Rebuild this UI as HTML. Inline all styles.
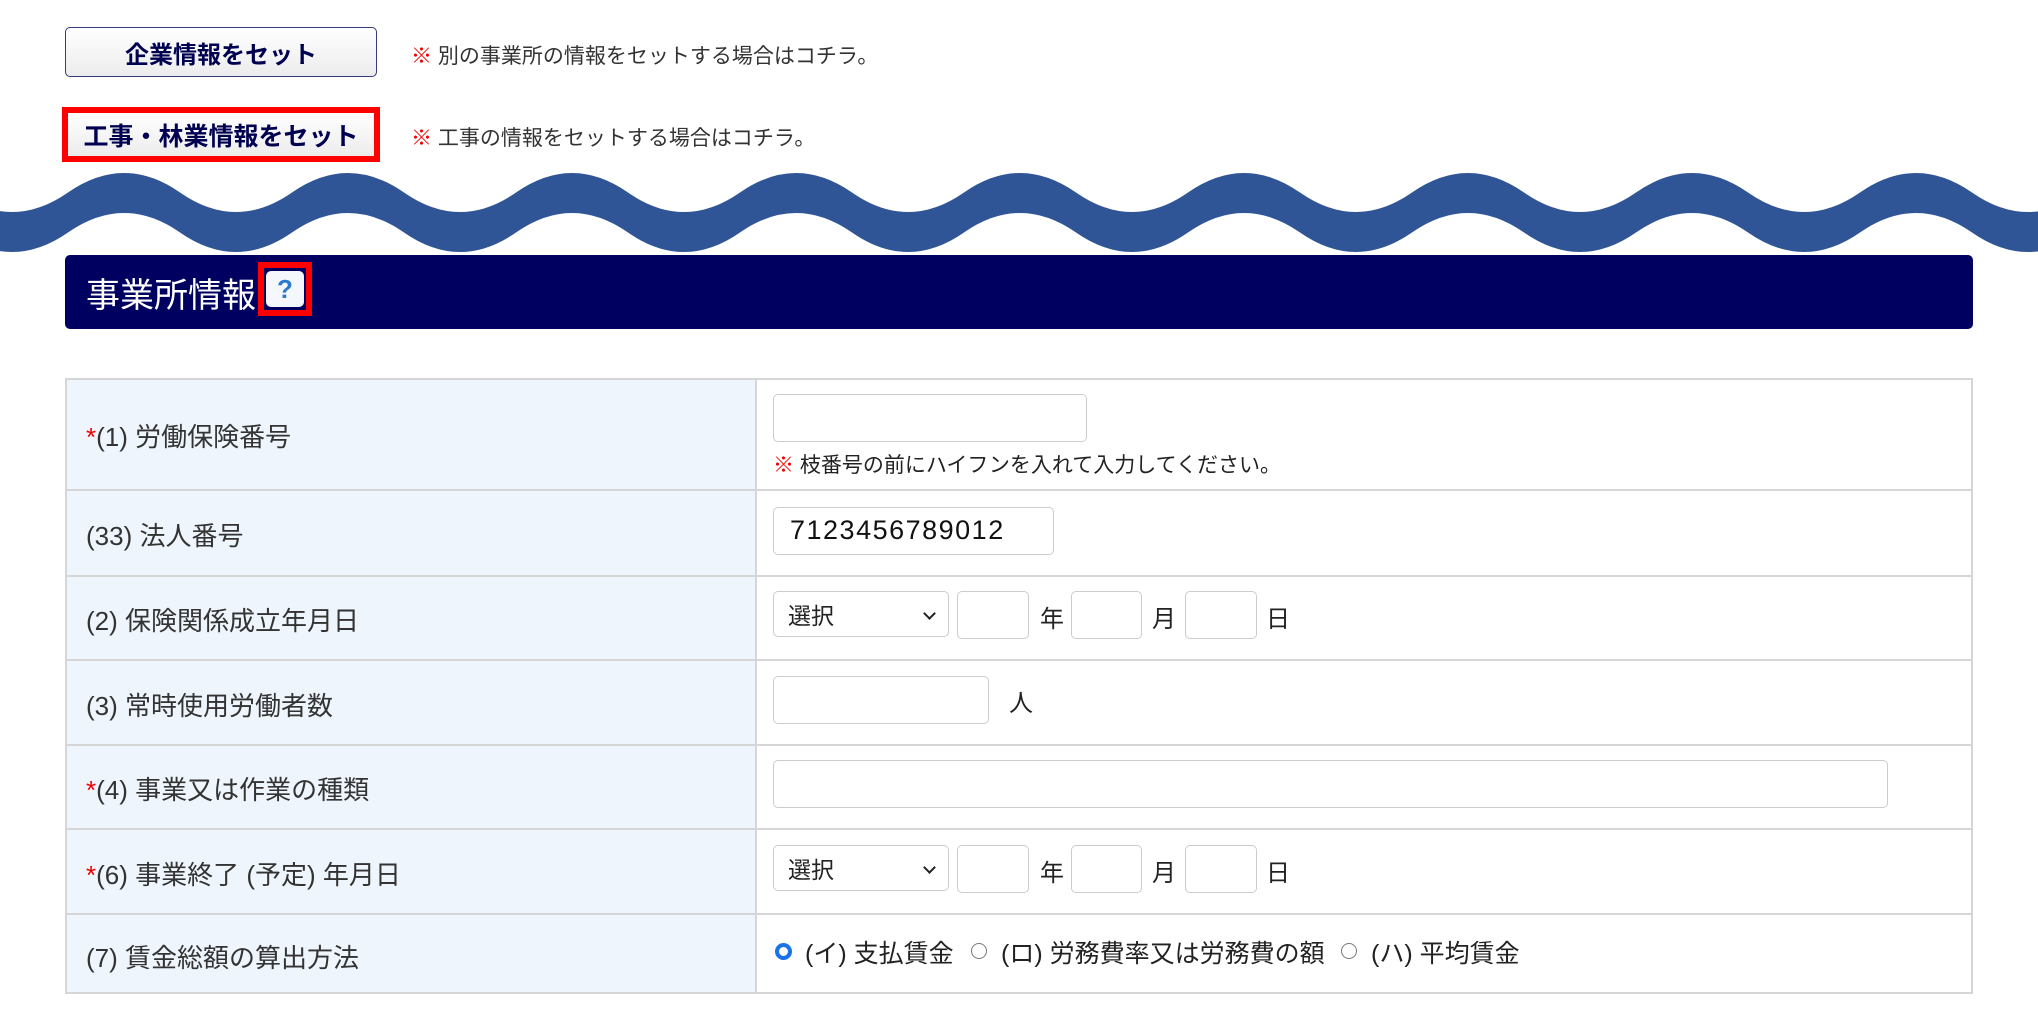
<!DOCTYPE html>
<html><head><meta charset="utf-8"><style>
*{box-sizing:border-box;margin:0;padding:0}
body{width:2038px;height:1018px;background:#fff;font-family:"Liberation Sans","Noto Sans CJK JP",sans-serif;color:#333;position:relative;overflow:hidden}
.a{position:absolute}
.btn{position:absolute;background:linear-gradient(#fff,#ececec);border:1px solid #333a80;border-radius:5px;color:#000050;font-weight:bold;font-size:24px;display:flex;align-items:center;justify-content:center}
.note{position:absolute;font-size:21px;color:#333}
.note b{color:#e00;font-weight:bold}
.lbl{position:absolute;left:86px;font-size:26px;color:#333}
.lbl i{color:#e00;font-style:normal}
.inp{position:absolute;border:1px solid #ccc;border-radius:5px;background:#fff}
.sel{position:absolute;border:1px solid #ccc;border-radius:5px;background:#fff;font-size:23px;padding-left:14px;display:flex;align-items:center;color:#222}
.sel:after{content:"";position:absolute;right:14px;top:17px;width:7px;height:7px;border-right:2px solid #222;border-bottom:2px solid #222;transform:rotate(45deg)}
.t{position:absolute;font-size:24px;color:#222}
.hl{position:absolute;left:65px;width:1908px;height:2px;background:#d6d6d6}
</style></head><body>
<div class="btn" style="left:65px;top:27px;width:312px;height:50px">企業情報をセット</div>
<div class="note" style="left:411px;top:40px"><b>※</b> 別の事業所の情報をセットする場合はコチラ。</div>
<div class="a" style="left:62px;top:107px;width:318px;height:55px;border:6px solid #f00"></div>
<div class="btn" style="left:68px;top:113px;width:306px;height:43px;border:none;border-radius:0;font-size:25px">工事・林業情報をセット</div>
<div class="note" style="left:411px;top:122px"><b>※</b> 工事の情報をセットする場合はコチラ。</div>
<svg class="a" style="left:0;top:0" width="2038" height="300" viewBox="0 0 2038 300">
<path fill="#305596" d="M -44 192.5 Q 12 231.5 68 192.5 T 180 192.5 T 292 192.5 T 404 192.5 T 516 192.5 T 628 192.5 T 740 192.5 T 852 192.5 T 964 192.5 T 1076 192.5 T 1188 192.5 T 1300 192.5 T 1412 192.5 T 1524 192.5 T 1636 192.5 T 1748 192.5 T 1860 192.5 T 1972 192.5 T 2084 192.5 L 2084 232.5 Q 2028 271.5 1972 232.5 T 1860 232.5 T 1748 232.5 T 1636 232.5 T 1524 232.5 T 1412 232.5 T 1300 232.5 T 1188 232.5 T 1076 232.5 T 964 232.5 T 852 232.5 T 740 232.5 T 628 232.5 T 516 232.5 T 404 232.5 T 292 232.5 T 180 232.5 T 68 232.5 T -44 232.5 Z"/>
</svg>
<div class="a" style="left:65px;top:255px;width:1908px;height:74px;background:#000060;border-radius:5px"></div>
<div class="a" style="left:86px;top:268px;font-size:34px;color:#fff">事業所情報</div>
<div class="a" style="left:258px;top:262px;width:54px;height:54px;border:6px solid #f00"></div>
<div class="a" style="left:266px;top:271px;width:38px;height:36px;background:#f4f8fc;border-radius:5px;color:#2a7ad0;font-weight:bold;font-size:26px;text-align:center;line-height:36px">?</div>

<div class="a" style="left:65px;top:378px;width:1908px;height:616px;border:2px solid #d6d6d6"></div>
<div class="a" style="left:67px;top:380px;width:688px;height:612px;background:#eef5fc"></div>
<div class="a" style="left:755px;top:380px;width:2px;height:612px;background:#d6d6d6"></div>
<div class="hl" style="top:489px"></div><div class="hl" style="top:575px"></div><div class="hl" style="top:659px"></div><div class="hl" style="top:744px"></div><div class="hl" style="top:828px"></div><div class="hl" style="top:913px"></div>

<div class="lbl" style="top:417px"><i>*</i>(1) 労働保険番号</div>
<div class="inp" style="left:773px;top:394px;width:314px;height:48px"></div>
<div class="note" style="left:773px;top:449px;color:#222"><b>※</b> 枝番号の前にハイフンを入れて入力してください。</div>

<div class="lbl" style="top:516px">(33) 法人番号</div>
<div class="inp" style="left:773px;top:507px;width:281px;height:48px;font-size:27px;letter-spacing:1.5px;color:#111;padding:7px 0 0 16px">7123456789012</div>

<div class="lbl" style="top:601px">(2) 保険関係成立年月日</div>
<div class="sel" style="left:773px;top:591px;width:176px;height:46px">選択</div>
<div class="inp" style="left:957px;top:591px;width:72px;height:48px"></div><div class="t" style="left:1040px;top:599px">年</div>
<div class="inp" style="left:1071px;top:591px;width:71px;height:48px"></div><div class="t" style="left:1152px;top:599px">月</div>
<div class="inp" style="left:1185px;top:591px;width:72px;height:48px"></div><div class="t" style="left:1266px;top:599px">日</div>

<div class="lbl" style="top:686px">(3) 常時使用労働者数</div>
<div class="inp" style="left:773px;top:676px;width:216px;height:48px"></div><div class="t" style="left:1009px;top:683px">人</div>

<div class="lbl" style="top:770px"><i>*</i>(4) 事業又は作業の種類</div>
<div class="inp" style="left:773px;top:760px;width:1115px;height:48px"></div>

<div class="lbl" style="top:855px"><i>*</i>(6) 事業終了 (予定) 年月日</div>
<div class="sel" style="left:773px;top:845px;width:176px;height:46px">選択</div>
<div class="inp" style="left:957px;top:845px;width:72px;height:48px"></div><div class="t" style="left:1040px;top:853px">年</div>
<div class="inp" style="left:1071px;top:845px;width:71px;height:48px"></div><div class="t" style="left:1152px;top:853px">月</div>
<div class="inp" style="left:1185px;top:845px;width:72px;height:48px"></div><div class="t" style="left:1266px;top:853px">日</div>

<div class="lbl" style="top:938px">(7) 賃金総額の算出方法</div>
<div class="a" style="left:775px;top:943px;width:17px;height:17px;border-radius:50%;border:4px solid #1a73e8;background:#fff"></div>
<div class="t" style="left:805px;top:934px;font-size:25px">(イ) 支払賃金</div>
<div class="a" style="left:971px;top:943px;width:16px;height:16px;border-radius:50%;border:1px solid #777"></div>
<div class="t" style="left:1001px;top:934px;font-size:25px">(ロ) 労務費率又は労務費の額</div>
<div class="a" style="left:1341px;top:943px;width:16px;height:16px;border-radius:50%;border:1px solid #777"></div>
<div class="t" style="left:1371px;top:934px;font-size:25px">(ハ) 平均賃金</div>
</body></html>
